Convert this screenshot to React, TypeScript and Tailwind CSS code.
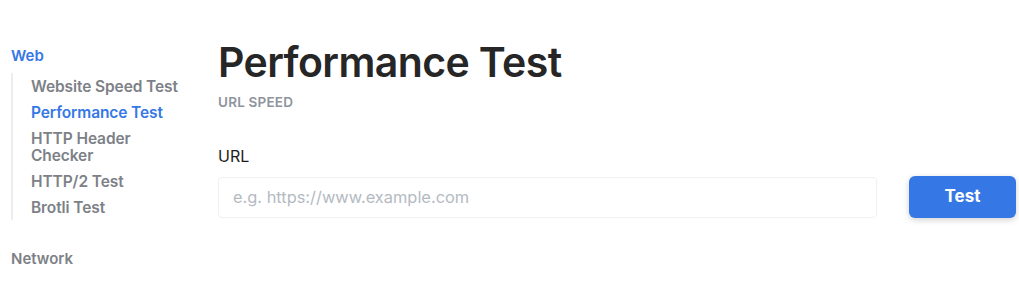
import React from "react";

const items = [
  { label: "Website Speed Test", active: false },
  { label: "Performance Test", active: true },
  { label: "HTTP Header Checker", active: false },
  { label: "HTTP/2 Test", active: false },
  { label: "Brotli Test", active: false },
];

function Sidebar() {
  return (
    <aside className="w-[218px] shrink-0 pl-[11px] pt-[47px]">
      <div className="text-[15px] leading-[18px] font-semibold text-[#3578e5]">Web</div>
      <ul className="mt-[8px] border-l-2 border-[#ebedf0] pl-[18px] pt-[5px] pb-[4px] flex flex-col gap-[9px]">
        {items.map((it) => (
          <li
            key={it.label}
            className={`w-[155px] text-[15.5px] leading-[17px] font-semibold tracking-[-0.1px] ${
              it.active ? "text-[#3578e5]" : "text-[#7d8187]"
            }`}
          >
            {it.label}
          </li>
        ))}
      </ul>
      <div className="mt-[30px] text-[15px] leading-[18px] font-semibold text-[#7d8187]">Network</div>
    </aside>
  );
}

export default function App() {
  return (
    <div
      className="flex w-[1019px] h-[281px] bg-white overflow-hidden"
      style={{ fontFamily: "Inter, 'Noto Sans', sans-serif" }}
    >
      <Sidebar />
      <main className="flex-1 pr-[3px] pt-[36px]">
        <h1 className="text-[41px] leading-[52px] font-semibold text-[#262626] tracking-[-0.6px]">
          Performance Test
        </h1>
        <div className="mt-[7px] text-[13.5px] leading-[14px] font-semibold tracking-[0.2px] text-[#8d949e]">
          URL SPEED
        </div>
        <label className="block mt-[37px] text-[16px] leading-[20px] text-[#1c1e21]">URL</label>
        <div className="mt-[10px] flex items-center gap-[32px]">
          <input
            type="text"
            placeholder="e.g. https://www.example.com"
            className="flex-1 h-[41px] rounded-[4px] border border-[#eef0f2] px-[14px] text-[16.4px] text-[#1c1e21] placeholder:text-[#b4bac2] outline-none"
          />
          <button
            type="button"
            className="w-[107px] h-[42px] rounded-[6px] bg-[#3578e5] text-white text-[17px] font-bold shadow-[0_2px_6px_rgba(0,0,0,0.18)]"
          >
            Test
          </button>
        </div>
      </main>
    </div>
  );
}
